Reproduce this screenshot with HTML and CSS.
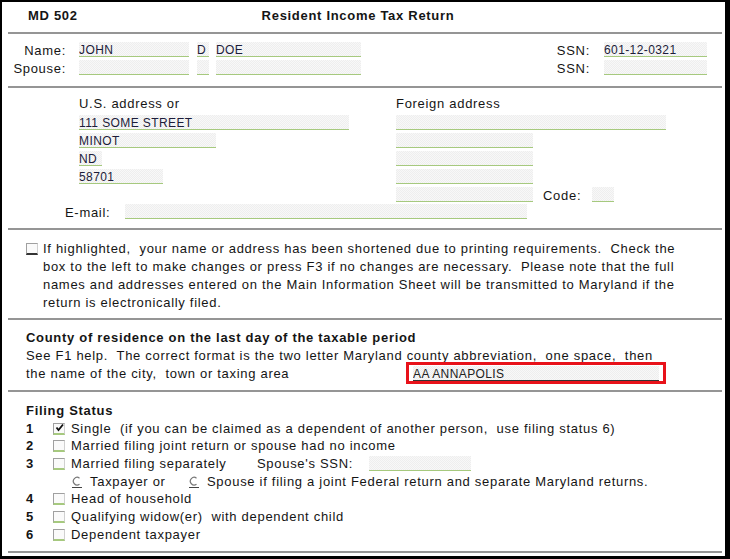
FILE: index.html
```html
<!DOCTYPE html>
<html lang="en">
<head>
  <meta charset="UTF-8" />
  <title>MD 502 - Resident Income Tax Return</title>
  <link rel="stylesheet" href="styles.css">
</head>
<body>
  <div class="form">
    <header class="sec head">
      <span class="form-id">MD 502</span>
      <h1>Resident Income Tax Return</h1>
      <span></span>
    </header>

    <section class="sec names">
      <div class="row">
        <span class="lbl name-lbl">Name:</span>
        <span class="fld f-first">JOHN</span>
        <span class="fld f-mi">D</span>
        <span class="fld f-last">DOE</span>
        <span class="lbl ssn-lbl">SSN:</span>
        <span class="fld f-ssn">601-12-0321</span>
      </div>
      <div class="row">
        <span class="lbl name-lbl">Spouse:</span>
        <span class="fld f-first"></span>
        <span class="fld f-mi"></span>
        <span class="fld f-last"></span>
        <span class="lbl ssn-lbl">SSN:</span>
        <span class="fld f-ssn"></span>
      </div>
    </section>

    <section class="sec address">
      <div class="addr-cols">
        <div class="col">
          <div class="col-lbl">U.S. address or</div>
          <span class="fld f-street">111 SOME STREET</span>
          <span class="fld f-city">MINOT</span>
          <span class="fld f-state">ND</span>
          <span class="fld f-zip">58701</span>
        </div>
        <div class="col">
          <div class="col-lbl">Foreign address</div>
          <span class="fld f-street"></span>
          <span class="fld f-city"></span>
          <span class="fld f-city"></span>
          <span class="fld f-city"></span>
          <div class="code-row">
            <span class="fld f-city"></span>
            <span class="lbl code-lbl">Code:</span>
            <span class="fld f-code"></span>
          </div>
        </div>
      </div>
      <div class="email-row">
        <span class="lbl email-lbl">E-mail:</span>
        <span class="fld f-email"></span>
      </div>
    </section>

    <section class="sec notice">
      <span class="box dark"></span>
      <p>If highlighted,&nbsp; your name or address has been shortened due to printing requirements.&nbsp; Check the<br>
      box to the left to make changes or press F3 if no changes are necessary.&nbsp; Please note that the full<br>
      names and addresses entered on the Main Information Sheet will be transmitted to Maryland if the<br>
      return is electronically filed.</p>
    </section>

    <section class="sec county">
      <div class="bold">County of residence on the last day of the taxable period</div>
      <div>See F1 help.&nbsp; The correct format is the two letter Maryland county abbreviation,&nbsp; one space,&nbsp; then</div>
      <div class="county-row">
        <span>the name of the city,&nbsp; town or taxing area</span>
        <span class="hilite"><span class="fld f-county">AA ANNAPOLIS</span></span>
      </div>
    </section>

    <section class="sec filing">
      <div class="bold">Filing Status</div>
      <div class="fs-row">
        <span class="num">1</span>
        <span class="box checked"><svg width="11" height="11" viewBox="0 0 11 11"><path d="M2.5 4.5 L4.5 7 L9 1.5" fill="none" stroke="#111" stroke-width="1.8"/></svg></span>
        <span>Single&nbsp; (if you can be claimed as a dependent of another person,&nbsp; use filing status 6)</span>
      </div>
      <div class="fs-row">
        <span class="num">2</span>
        <span class="box"></span>
        <span>Married filing joint return or spouse had no income</span>
      </div>
      <div class="fs-row">
        <span class="num">3</span>
        <span class="box"></span>
        <span class="sep-lbl">Married filing separately</span>
        <span class="sp-lbl">Spouse's SSN:</span>
        <span class="fld f-spssn"></span>
      </div>
      <div class="fs-row radio-row">
        <span class="radio"><svg width="12" height="14" viewBox="0 0 12 14"><path d="M8.5 3.2 A3.8 3.8 0 1 0 8.5 9.2" fill="none" stroke="#777" stroke-width="1.2"/><path d="M1 12.5 H11" stroke="#444" stroke-width="1"/></svg></span>
        <span class="tp-lbl">Taxpayer or</span>
        <span class="radio"><svg width="12" height="14" viewBox="0 0 12 14"><path d="M8.5 3.2 A3.8 3.8 0 1 0 8.5 9.2" fill="none" stroke="#777" stroke-width="1.2"/><path d="M1 12.5 H11" stroke="#444" stroke-width="1"/></svg></span>
        <span>Spouse if filing a joint Federal return and separate Maryland returns.</span>
      </div>
      <div class="fs-row">
        <span class="num">4</span>
        <span class="box"></span>
        <span>Head of household</span>
      </div>
      <div class="fs-row">
        <span class="num">5</span>
        <span class="box"></span>
        <span>Qualifying widow(er)&nbsp; with dependent child</span>
      </div>
      <div class="fs-row">
        <span class="num">6</span>
        <span class="box"></span>
        <span>Dependent taxpayer</span>
      </div>
    </section>
  </div>
</body>
</html>
```

FILE: styles.css
```css
body {
  margin: 0;
  font-family: "Liberation Sans", Arial, sans-serif;
  font-size: 13px;
  letter-spacing: 0.7px;
  color: #151515;
  background: #fff;
}

.form {
  width: 730px;
  height: 559px;
  box-sizing: border-box;
  border-style: solid;
  border-color: #000;
  border-width: 2px 5px 3px 2px;
  padding: 0 3px 0 6px;
}

.sec {
  box-sizing: border-box;
  border-bottom: 2px solid #959595;
}

.bold { font-weight: bold; }

/* header */
.head {
  height: 32px;
  display: grid;
  grid-template-columns: 1fr auto 1fr;
  align-items: center;
  padding: 0 34px 3px 20px;
}
.form-id { font-weight: bold; }
.head h1 {
  margin: 0;
  font-size: 13px;
  font-weight: bold;
}

/* fields */
.fld {
  display: inline-block;
  box-sizing: border-box;
  height: 15px;
  line-height: 17px;
  font-size: 12px;
  letter-spacing: 0.4px;
  color: #1c1c3a;
  white-space: nowrap;
  overflow: hidden;
  background: repeating-conic-gradient(#eeeeee 0 25%, #f8f8f8 0 50%) 0 0 / 2px 2px;
  border-bottom: 1px solid #a6c97e;
}

.lbl { white-space: nowrap; }

/* names */
.names {
  height: 54px;
  padding-top: 8px;
}
.row {
  display: flex;
  align-items: flex-end;
  height: 15px;
  margin-bottom: 3px;
}
.name-lbl {
  width: 58px;
  text-align: right;
  margin-right: 13px;
  line-height: 13px;
}
.f-first { width: 110px; margin-right: 8px; }
.f-mi { width: 12px; margin-right: 7px; }
.f-last { width: 145px; }
.ssn-lbl {
  margin-left: auto;
  margin-right: 14px;
  line-height: 13px;
}
.f-ssn { width: 103px; margin-right: 15px; }

/* address */
.address {
  height: 142px;
  padding-top: 8px;
}
.addr-cols {
  display: grid;
  grid-template-columns: 317px 1fr;
  padding-left: 71px;
}
.col {
  display: flex;
  flex-direction: column;
  align-items: flex-start;
  gap: 3px;
}
.col-lbl {
  height: 16px;
  line-height: 16px;
}
.f-street { width: 270px; }
.f-city { width: 137px; }
.f-state { width: 23px; }
.f-zip { width: 84px; }
.code-row {
  display: flex;
  align-items: flex-end;
}
.code-lbl { margin: 0 11px 0 10px; line-height: 12px; }
.f-code { width: 22px; }

.email-row {
  display: flex;
  align-items: flex-end;
  padding-left: 57px;
  margin-top: 2px;
}
.email-lbl { width: 60px; line-height: 12px; }
.f-email { width: 402px; }

/* notice */
.notice {
  height: 90px;
  display: flex;
  align-items: flex-start;
  padding: 10px 0 0 18px;
}
.notice p {
  margin: 0 0 0 5px;
  line-height: 18px;
  white-space: nowrap;
}

.box {
  display: inline-block;
  flex: none;
  box-sizing: border-box;
  width: 12px;
  height: 12px;
  border: 1px solid #a0a0a0;
  border-right-color: #d0d0d0;
  border-bottom: 2px solid #a6c97e;
  background: #fafafa;
  position: relative;
}
.box.dark {
  margin-top: 3px;
  border-bottom-color: #333;
}
.box svg {
  position: absolute;
  left: 0;
  top: -1px;
}

/* county */
.county {
  height: 72px;
  padding: 9px 0 0 18px;
  line-height: 18px;
}
.county-row {
  display: flex;
  align-items: center;
  height: 18px;
}
.hilite {
  margin-left: auto;
  margin-right: 56px;
  margin-top: -2px;
  box-sizing: border-box;
  width: 260px;
  height: 22px;
  border: 3px solid #e8121a;
  padding: 1px 4px 0 4px;
}
.f-county {
  width: 100%;
  border-bottom-color: #333;
  color: #222;
}

/* filing status */
.filing {
  height: 161px;
  padding: 10px 0 0 18px;
  line-height: 17.7px;
}
.fs-row {
  display: flex;
  align-items: center;
  height: 17.7px;
}
.num {
  width: 27px;
  font-weight: bold;
}
.fs-row .box { margin-right: 6px; }
.sep-lbl { width: 186px; }
.sp-lbl { width: 112px; }
.f-spssn { width: 102px; }
.radio-row { padding-left: 45px; }
.radio {
  display: inline-block;
  width: 12px;
  height: 14px;
  margin-right: 7px;
}
.radio svg { display: block; }
.tp-lbl { width: 98px; }
```
